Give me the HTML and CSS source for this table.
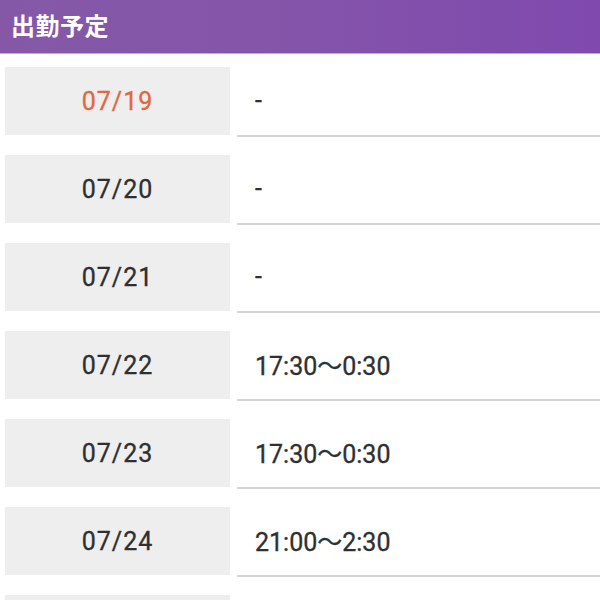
FILE: index.html
```html
<!DOCTYPE html>
<html lang="ja">
<head>
<meta charset="utf-8">
<link rel="stylesheet" href="styles.css">
</head>
<body>
<div class="header"><h2 class="title">出勤予定</h2></div>
<div class="schedule">
  <div class="row"><div class="date today">07/19</div><div class="time">-</div></div>
  <div class="row"><div class="date">07/20</div><div class="time">-</div></div>
  <div class="row"><div class="date">07/21</div><div class="time">-</div></div>
  <div class="row"><div class="date">07/22</div><div class="time">17:30〜0:30</div></div>
  <div class="row"><div class="date">07/23</div><div class="time">17:30〜0:30</div></div>
  <div class="row"><div class="date">07/24</div><div class="time">21:00〜2:30</div></div>
  <div class="row"><div class="date"></div><div class="time"></div></div>
</div>
</body>
</html>
```
FILE: styles.css
```css
html, body {
  margin: 0;
  padding: 0;
  background: #fff;
  font-family: Roboto, "Noto Sans CJK JP", sans-serif;
  color: #333;
}
.header {
  height: 54px;
  box-sizing: border-box;
  background: linear-gradient(90deg, #8558a7 0%, #8454aa 50%, #7f49ae 100%);
  border-bottom: 1px solid #c9a6d6;
  display: flex;
  align-items: center;
  padding-left: 11px;
  padding-bottom: 4px;
}
.title {
  margin: 0;
  color: #fff;
  font-family: "Noto Sans CJK JP", sans-serif;
  font-size: 24px;
  font-weight: 700;
  letter-spacing: 0.5px;
}
.schedule {
  padding-top: 13px;
}
.row {
  display: flex;
  align-items: flex-start;
  margin-bottom: 18px;
}
.date {
  margin-left: 5px;
  width: 225px;
  height: 68px;
  background: #eeeeee;
  display: flex;
  align-items: center;
  justify-content: center;
  font-size: 25px;
  letter-spacing: 1px;
  color: #2f2f2f;
  -webkit-text-stroke: 0.3px #2f2f2f;
}
.date.today {
  color: #e2673d;
  -webkit-text-stroke: 0.3px #e2673d;
}
.time {
  margin-left: 7px;
  flex: 1;
  height: 70px;
  box-sizing: border-box;
  border-bottom: 2px solid #d4d4d4;
  display: flex;
  align-items: center;
  padding-left: 18px;
  padding-bottom: 2px;
  font-size: 25px;
  color: #2f2f2f;
  -webkit-text-stroke: 0.3px #2f2f2f;
}
```
